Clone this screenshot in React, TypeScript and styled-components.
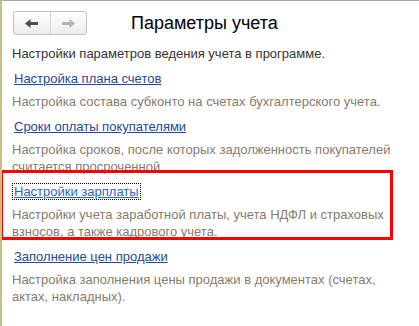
import React from "react";
import styled, { createGlobalStyle } from "styled-components";

const Global = createGlobalStyle`
  html, body { margin: 0; padding: 0; background: #fff; }
  body { width: 419px; height: 326px; overflow: hidden; font-family: "Liberation Sans", Arial, sans-serif; }
`;

const Page = styled.div`
  position: relative;
  box-sizing: border-box;
  width: 419px;
  height: 326px;
  border-top: 1px solid #a6a6a6;
  border-left: 2px solid #cbbf86;
  padding: 10px 10px 0 10px;
  overflow: hidden;
`;

const Header = styled.div`
  display: flex;
  align-items: center;
  height: 24px;
  margin-left: 1px;
`;

const NavGroup = styled.div`
  display: flex;
  box-sizing: border-box;
  width: 74px;
  height: 24px;
  border: 1px solid #c3c3c3;
  border-radius: 3px;
  background: linear-gradient(#ffffff, #ececec);
  overflow: hidden;
`;

const NavButton = styled.div<{ $divider?: boolean }>`
  flex: 1;
  display: flex;
  align-items: center;
  justify-content: center;
  border-left: ${(p) => (p.$divider ? "1px solid #d6d6d6" : "none")};
`;

const Title = styled.h1`
  margin: 0 0 0 44px;
  font-size: 18px;
  font-weight: normal;
  color: #000;
  line-height: 22px;
`;

const Intro = styled.div`
  margin-top: 10px;
  font-size: 13px;
  line-height: 17px;
  color: #333;
`;

const List = styled.div`
  display: flex;
  flex-direction: column;
  gap: 8px;
  margin-top: 8px;
`;

const Item = styled.div`
  display: flex;
  flex-direction: column;
  align-items: flex-start;
`;

const Link = styled.a<{ $focused?: boolean }>`
  display: inline-block;
  box-sizing: border-box;
  height: 17px;
  padding: 0 1px;
  border: 1px dotted ${(p) => (p.$focused ? "#000" : "transparent")};
  font-size: 13px;
  line-height: 15px;
  color: ${(p) => (p.$focused ? "#2f5fcf" : "#24489a")};
  text-decoration: underline;
  cursor: pointer;
`;

const Desc = styled.div`
  margin-top: 6px;
  font-size: 13px;
  line-height: 17px;
  color: #877b6b;
`;

const Highlight = styled.div`
  position: absolute;
  left: -2px;
  top: 169px;
  width: 393px;
  height: 70px;
  box-sizing: border-box;
  border: 3px solid #ff0000;
  pointer-events: none;
`;

const Arrow = ({ dir, color }: { dir: "left" | "right"; color: string }) => (
  <svg width="13" height="9" viewBox="0 0 13 9">
    <path
      d="M0 4.5 L5.5 0 V3 H13 V6 H5.5 V9 Z"
      fill={color}
      transform={dir === "right" ? "translate(13 0) scale(-1 1)" : undefined}
    />
  </svg>
);

const items = [
  {
    link: "Настройка плана счетов",
    desc: "Настройка состава субконто на счетах бухгалтерского учета.",
  },
  {
    link: "Сроки оплаты покупателями",
    desc: "Настройка сроков, после которых задолженность покупателей считается просроченной",
  },
  {
    link: "Настройки зарплаты",
    desc: "Настройки учета заработной платы, учета НДФЛ и страховых взносов, а также кадрового учета.",
    focused: true,
  },
  {
    link: "Заполнение цен продажи",
    desc: "Настройка заполнения цены продажи в документах (счетах, актах, накладных).",
  },
];

export default function App() {
  return (
    <>
      <Global />
      <Page>
        <Header>
          <NavGroup>
            <NavButton>
              <Arrow dir="left" color="#4d4d4d" />
            </NavButton>
            <NavButton $divider>
              <Arrow dir="right" color="#b3b3b3" />
            </NavButton>
          </NavGroup>
          <Title>Параметры учета</Title>
        </Header>
        <Intro>Настройки параметров ведения учета в программе.</Intro>
        <List>
          {items.map((it) => (
            <Item key={it.link}>
              <Link $focused={it.focused}>{it.link}</Link>
              <Desc>{it.desc}</Desc>
            </Item>
          ))}
        </List>
        <Highlight />
      </Page>
    </>
  );
}
